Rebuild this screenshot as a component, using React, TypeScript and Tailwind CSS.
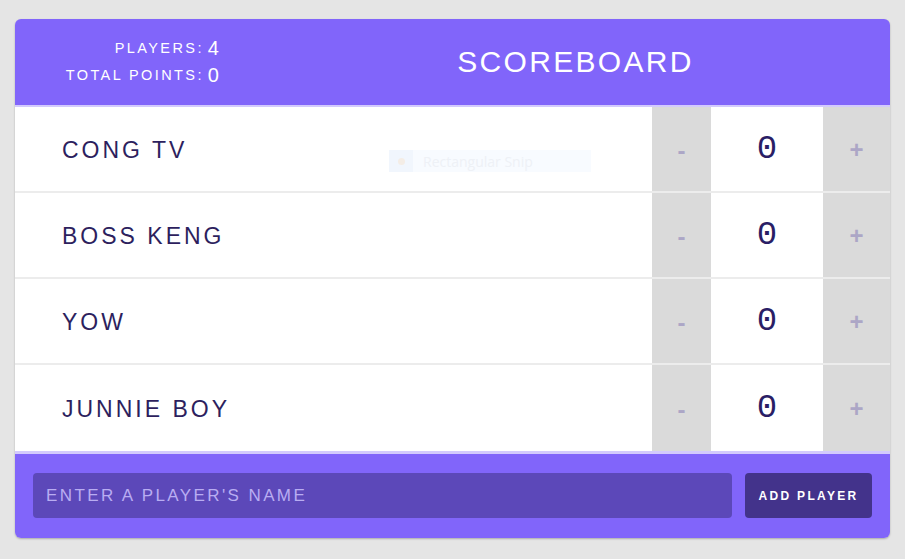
import { useState } from 'react';

type Player = { id: number; name: string; score: number };

const initialPlayers: Player[] = [
  { id: 1, name: 'Cong TV', score: 0 },
  { id: 2, name: 'Boss Keng', score: 0 },
  { id: 3, name: 'Yow', score: 0 },
  { id: 4, name: 'Junnie Boy', score: 0 },
];

export default function App() {
  const [players, setPlayers] = useState<Player[]>(initialPlayers);
  const [name, setName] = useState('');

  const changeScore = (id: number, delta: number) => {
    setPlayers(prev => prev.map(p => (p.id === id ? { ...p, score: p.score + delta } : p)));
  };

  const addPlayer = () => {
    if (!name.trim()) return;
    setPlayers(prev => [...prev, { id: Date.now(), name: name.trim(), score: 0 }]);
    setName('');
  };

  const total = players.reduce((sum, p) => sum + p.score, 0);

  return (
    <div className="min-h-screen bg-[#e5e5e5] pt-[19px] px-[15px] font-['Liberation_Sans',Arial,sans-serif]">
      <div className="relative w-[875px] rounded-[6px] overflow-hidden shadow-[0_1px_2px_rgba(0,0,0,0.25)]">
        {/* header */}
        <div className="flex items-center h-[88px] bg-[#8165fa] border-b-2 border-[#d3cafd] text-white">
          <table className="ml-[50px] w-[154px] text-right">
            <tbody>
              <tr>
                <td className="text-[14.5px] tracking-[2.4px] uppercase leading-[26px] pr-[4px]">Players:</td>
                <td className="text-left text-[20px] leading-[26px]">{players.length}</td>
              </tr>
              <tr>
                <td className="text-[14.5px] tracking-[2.4px] uppercase leading-[28px] whitespace-nowrap pr-[4px]">Total Points:</td>
                <td className="text-left text-[20px] leading-[28px]">{total}</td>
              </tr>
            </tbody>
          </table>
          <h1 className="flex-1 text-center text-[30px] tracking-[2.3px] uppercase pl-[42px] pb-[2px]">Scoreboard</h1>
        </div>

        {/* players */}
        {players.map((p, i) => (
          <div
            key={p.id}
            className={`flex ${i === players.length - 1 ? 'h-[86px]' : 'h-[86px] border-b-2 border-[#ececec]'}`}
          >
            <div className="flex-1 flex items-center bg-white pl-[47px] pt-[3px] text-[23px] tracking-[3px] uppercase text-[#2d1f5e]">
              {p.name}
            </div>
            <button
              onClick={() => changeScore(p.id, -1)}
              className="w-[59px] bg-[#dadada] text-[#aca6c6] text-[24px] font-bold pt-[4px]"
            >
              -
            </button>
            <div className="w-[112px] flex items-center justify-center bg-white text-[34px] text-[#2a1e66] font-['Liberation_Mono',monospace]">
              {p.score}
            </div>
            <button
              onClick={() => changeScore(p.id, 1)}
              className="w-[67px] bg-[#dadada] text-[#aca6c6] text-[24px] font-bold pt-[2px]"
            >
              +
            </button>
          </div>
        ))}

        {/* footer */}
        <div className="flex items-center gap-[13px] h-[87px] bg-[#8165fa] border-t-[3px] border-[#d3cafd] px-[18px] pb-[1px]">
          <input
            value={name}
            onChange={e => setName(e.target.value)}
            placeholder="ENTER A PLAYER'S NAME"
            className="flex-1 h-[45px] rounded-[4px] bg-[#5c48b9] px-[13px] text-[17px] tracking-[2.4px] text-white placeholder:text-[#b9adf2] outline-none"
          />
          <button
            onClick={addPlayer}
            className="w-[127px] h-[45px] rounded-[4px] bg-[#43338b] text-white text-[12px] font-bold tracking-[2.3px] uppercase"
          >
            Add Player
          </button>
        </div>

        {/* faint snipping tool overlay captured in the screenshot */}
        <div className="absolute left-[374px] top-[131px] flex items-center h-[22px] w-[202px] bg-[#f8fbff] pointer-events-none">
          <div className="w-[24px] h-[22px] bg-[#f1f6fd] flex items-center justify-center">
            <div className="w-[7px] h-[7px] rounded-full bg-[#f4ede6]" />
          </div>
          <span className="ml-[10px] text-[14px] text-[#eef1f6] font-['Open_Sans',sans-serif]">Rectangular Snip</span>
        </div>
      </div>
    </div>
  );
}
